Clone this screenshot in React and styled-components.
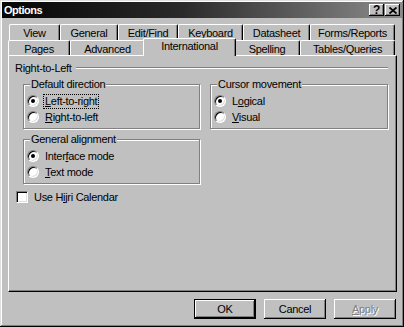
import React from 'react'
import styled, { createGlobalStyle } from 'styled-components'

const Global = createGlobalStyle`
  html, body { margin: 0; padding: 0; background: #c0c0c0; }
  body {
    font-family: "Liberation Sans", Arial, sans-serif;
    font-size: 11px;
    letter-spacing: -0.3px;
    color: #000;
  }
  * { box-sizing: border-box; }
`

const Window = styled.div`
  width: 404px;
  height: 327px;
  padding: 2px;
  background: #c0c0c0;
  display: flex;
  flex-direction: column;
  box-shadow: inset -1px -1px 0 #000, inset 1px 1px 0 #dfdfdf,
    inset -2px -2px 0 #808080, inset 2px 2px 0 #fff;
`

const TitleBar = styled.div`
  height: 16px;
  display: flex;
  align-items: center;
  padding: 0 2px 0 2px;
  background: linear-gradient(to right, #050505 0%, #2a2a2a 45%, #8c8c8c 100%);
`

const Title = styled.span`
  flex: 1;
  color: #fff;
  font-weight: bold;
  font-size: 11px;
  letter-spacing: -0.5px;
`

const TitleButton = styled.span`
  width: 15px;
  height: 12px;
  margin-left: ${p => p.$gap || 0}px;
  background: #c0c0c0;
  display: flex;
  align-items: center;
  justify-content: center;
  font-weight: bold;
  font-size: 12px;
  line-height: 1;
  box-shadow: inset -1px -1px 0 #000, inset 1px 1px 0 #fff,
    inset -2px -2px 0 #808080;
`

const Body = styled.div`
  flex: 1;
  display: flex;
  flex-direction: column;
  padding: 6px 5px 0 6px;
`

const TabRow = styled.div`
  display: flex;
  height: ${p => p.$h}px;
  padding-left: ${p => p.$indent || 0}px;
`

const Tab = styled.div`
  width: ${p => p.$w}px;
  display: flex;
  align-items: center;
  justify-content: center;
  padding-top: 1px;
  background: #c0c0c0;
  border-top: 1px solid #fff;
  border-left: 1px solid #fff;
  border-right: 1px solid #000;
  border-radius: 2px 2px 0 0;
  box-shadow: inset -1px 0 0 #808080;
  white-space: nowrap;
  ${p => p.$active && `
    position: relative;
    z-index: 1;
    margin: -2px -2px -1px -2px;
    width: ${p.$w + 4}px;
    padding-top: 0;
    padding-bottom: 3px;
  `}
`

const Panel = styled.div`
  height: 237px;
  background: #c0c0c0;
  border-top: 1px solid #fff;
  border-left: 1px solid #fff;
  border-right: 1px solid #000;
  border-bottom: 1px solid #000;
  box-shadow: inset -1px -1px 0 #808080;
  padding: 5px 8px 0 0;
  display: flex;
  flex-direction: column;
`

const SectionHead = styled.div`
  display: flex;
  align-items: center;
  height: 13px;
  padding-left: 6px;
  &::after {
    content: '';
    flex: 1;
    margin-left: 4px;
    height: 0;
    border-top: 1px solid #808080;
    border-bottom: 1px solid #fff;
  }
`

const Columns = styled.div`
  display: grid;
  grid-template-columns: 177px 178px;
  column-gap: 10px;
  margin-top: 4px;
  padding-left: 14px;
  align-items: start;
`

const Column = styled.div`
  display: flex;
  flex-direction: column;
  gap: 4px;
`

const Group = styled.fieldset`
  margin: 0;
  min-width: 0;
  padding: 2px 6px 3px 3px;
  border: 1px solid #808080;
  box-shadow: inset 1px 1px 0 #fff, 1px 1px 0 #fff;
`

const Legend = styled.legend`
  padding: 0 1px;
  margin-left: 3px;
  line-height: 13px;
  background: #c0c0c0;
`

const Option = styled.div`
  display: flex;
  align-items: center;
  height: 16px;
`

const Radio = styled.span`
  width: 12px;
  height: 12px;
  border-radius: 50%;
  background: #fff;
  flex: none;
  position: relative;
  border: 1px solid;
  border-color: #808080 #fff #fff #808080;
  box-shadow: inset 1px 1px 0 #000, inset -1px -1px 0 #dfdfdf;
  &::after {
    content: '';
    display: ${p => (p.$on ? 'block' : 'none')};
    position: absolute;
    left: 3px;
    top: 3px;
    width: 4px;
    height: 4px;
    border-radius: 50%;
    background: #000;
  }
`

const Check = styled.span`
  width: 12px;
  height: 12px;
  background: #fff;
  flex: none;
  border: 1px solid;
  border-color: #808080 #fff #fff #808080;
  box-shadow: inset 1px 1px 0 #000, inset -1px -1px 0 #dfdfdf;
`

const Label = styled.span`
  margin-left: ${p => p.$gap || 5}px;
  padding: 0 1px;
  line-height: 13px;
  outline: ${p => (p.$focus ? '1px dotted #000' : 'none')};
  white-space: nowrap;
`

const CheckRow = styled(Option)`
  margin-top: 5px;
  padding-left: 7px;
`

const ButtonRow = styled.div`
  display: flex;
  justify-content: flex-end;
  gap: 8px;
  margin-top: 7px;
  padding-right: 1px;
`

const Button = styled.div`
  width: 62px;
  height: 20px;
  display: flex;
  align-items: center;
  justify-content: center;
  background: #c0c0c0;
  color: ${p => (p.$disabled ? '#808080' : '#000')};
  text-shadow: ${p => (p.$disabled ? '1px 1px 0 #fff' : 'none')};
  box-shadow: inset -1px -1px 0 #000, inset 1px 1px 0 #fff, inset -2px -2px 0 #808080;
  border: ${p => (p.$default ? '1px solid #000' : 'none')};
`

const row1 = [
  ['View', 51], ['General', 58], ['Edit/Find', 60],
  ['Keyboard', 65], ['Datasheet', 67], ['Forms/Reports', 85],
]
const row2 = [
  ['Pages', 62], ['Advanced', 75], ['International', 89],
  ['Spelling', 66], ['Tables/Queries', 95],
]

const CloseIcon = () => (
  <svg width="8" height="7" viewBox="0 0 8 7">
    <path d="M0.5 0.5 L7.5 6.5 M7.5 0.5 L0.5 6.5" stroke="#000" strokeWidth="1.8" />
  </svg>
)

export default function App() {
  return (
    <>
      <Global />
      <Window>
        <TitleBar>
          <Title>Options</Title>
          <TitleButton>?</TitleButton>
          <TitleButton $gap={1}><CloseIcon /></TitleButton>
        </TitleBar>
        <Body>
          <TabRow $h={16} $indent={1}>
            {row1.map(([t, w]) => <Tab key={t} $w={w}>{t}</Tab>)}
          </TabRow>
          <TabRow $h={15}>
            {row2.map(([t, w]) => (
              <Tab key={t} $w={w} $active={t === 'International'}>{t}</Tab>
            ))}
          </TabRow>
          <Panel>
            <SectionHead>Right-to-Left</SectionHead>
            <Columns>
              <Column>
                <Group>
                  <Legend>Default direction</Legend>
                  <Option>
                    <Radio $on />
                    <Label $focus><u>L</u>eft-to-right</Label>
                  </Option>
                  <Option>
                    <Radio />
                    <Label><u>R</u>ight-to-left</Label>
                  </Option>
                </Group>
                <Group>
                  <Legend>General alignment</Legend>
                  <Option>
                    <Radio $on />
                    <Label>Inter<u>f</u>ace mode</Label>
                  </Option>
                  <Option>
                    <Radio />
                    <Label><u>T</u>ext mode</Label>
                  </Option>
                </Group>
              </Column>
              <Column>
                <Group>
                  <Legend>Cursor movement</Legend>
                  <Option>
                    <Radio $on />
                    <Label>L<u>o</u>gical</Label>
                  </Option>
                  <Option>
                    <Radio />
                    <Label><u>V</u>isual</Label>
                  </Option>
                </Group>
              </Column>
            </Columns>
            <CheckRow>
              <Check />
              <Label>Use H<u>i</u>jri Calendar</Label>
            </CheckRow>
          </Panel>
          <ButtonRow>
            <Button $default>OK</Button>
            <Button>Cancel</Button>
            <Button $disabled><u>A</u>pply</Button>
          </ButtonRow>
        </Body>
      </Window>
    </>
  )
}
